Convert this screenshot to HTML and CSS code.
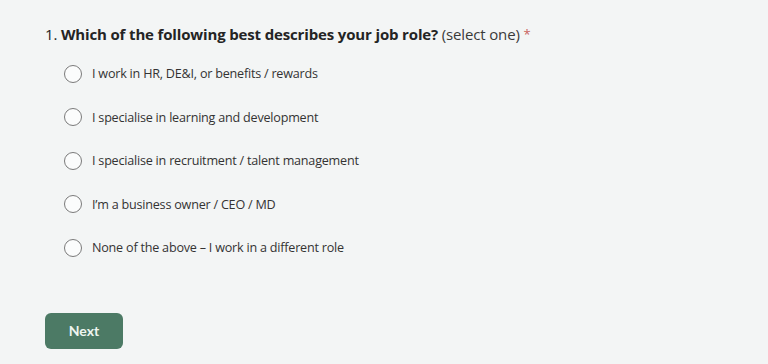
FILE: index.html
```html
<!DOCTYPE html>
<html lang="en">
<head>
<meta charset="utf-8">
<link rel="stylesheet" href="styles.css">
</head>
<body>
<main class="form">
  <div class="question">
    <span class="num">1.</span> <span class="q-title">Which of the following best describes your job role?</span> <span class="q-hint">(select one)</span> <span class="req">*</span>
  </div>
  <div class="options">
    <label class="option"><span class="radio"></span><span class="opt-text">I work in HR, DE&amp;I, or benefits / rewards</span></label>
    <label class="option"><span class="radio"></span><span class="opt-text">I specialise in learning and development</span></label>
    <label class="option"><span class="radio"></span><span class="opt-text">I specialise in recruitment / talent management</span></label>
    <label class="option"><span class="radio"></span><span class="opt-text">I’m a business owner / CEO / MD</span></label>
    <label class="option"><span class="radio"></span><span class="opt-text">None of the above – I work in a different role</span></label>
  </div>
  <button class="next">Next</button>
</main>
</body>
</html>
```
FILE: styles.css
```css
html, body {
  margin: 0;
  padding: 0;
  background: #f3f5f5;
  height: 100%;
}
body {
  font-family: "Open Sans", "Noto Sans", sans-serif;
  color: #2b2b2b;
}
.form {
  padding: 23px 0 0 45px;
}
.question {
  font-size: 15px;
  line-height: 22px;
  letter-spacing: -0.15px;
  color: #242424;
}
.num { font-weight: 400; }
.q-title { font-weight: 700; }
.q-hint { color: #3a3a3a; }
.req {
  color: #c8625c;
  font-size: 13px;
  vertical-align: 1px;
}
.options {
  display: flex;
  flex-direction: column;
  margin-top: 7px;
  margin-left: 19px;
}
.option {
  display: flex;
  align-items: center;
  height: 43.5px;
  font-size: 12.6px;
  letter-spacing: -0.22px;
  color: #333;
}
.radio {
  width: 16px;
  height: 16px;
  border: 1.3px solid #7a7a7a;
  border-radius: 50%;
  background: #fbfcfc;
  margin-right: 10px;
  flex: none;
}
.next {
  display: block;
  margin-top: 43px;
  width: 78px;
  height: 36px;
  border: none;
  border-radius: 6px;
  background: #4c7a65;
  color: #eef5f0;
  font-family: Lato, sans-serif;
  font-weight: 700;
  font-size: 14px;
}
```
